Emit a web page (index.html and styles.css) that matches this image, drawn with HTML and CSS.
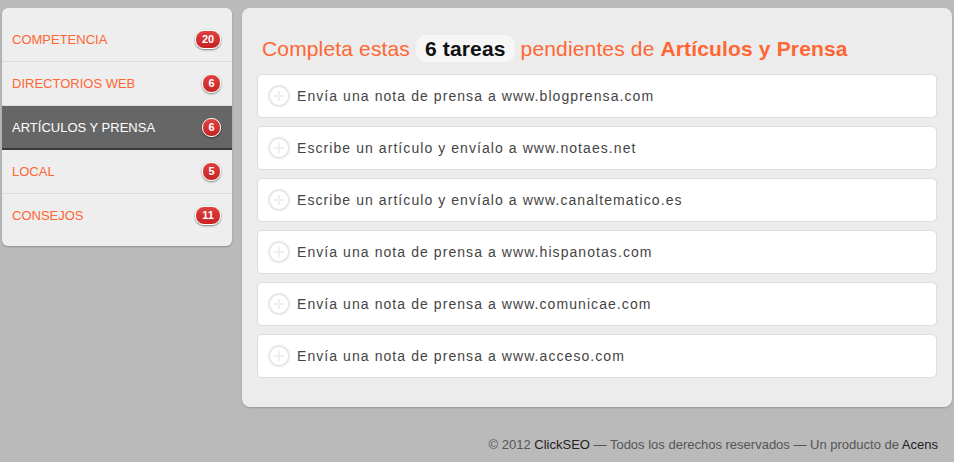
FILE: index.html
```html
<!DOCTYPE html>
<html lang="es">
<head>
    <meta charset="UTF-8">
    <title>ClickSEO - Tareas pendientes</title>
    <link rel="stylesheet" href="styles.css">
</head>
<body>

    <div class="page">
        <ul class="sidebar">
            <li class="cat"><span>COMPETENCIA</span><span class="badge wide">20</span></li>
            <li class="cat"><span>DIRECTORIOS WEB</span><span class="badge">6</span></li>
            <li class="cat active"><span>ARTÍCULOS Y PRENSA</span><span class="badge">6</span></li>
            <li class="cat"><span>LOCAL</span><span class="badge">5</span></li>
            <li class="cat last"><span>CONSEJOS</span><span class="badge wide">11</span></li>
        </ul>

        <div class="main">
            <h1 class="title">Completa estas <span class="count">6 tareas</span> pendientes de <b>Artículos y Prensa</b></h1>

            <div class="task"><span class="check"></span>Envía una nota de prensa a www.blogprensa.com</div>
            <div class="task"><span class="check"></span>Escribe un artículo y envíalo a www.notaes.net</div>
            <div class="task"><span class="check"></span>Escribe un artículo y envíalo a www.canaltematico.es</div>
            <div class="task"><span class="check"></span>Envía una nota de prensa a www.hispanotas.com</div>
            <div class="task"><span class="check"></span>Envía una nota de prensa a www.comunicae.com</div>
            <div class="task"><span class="check"></span>Envía una nota de prensa a www.acceso.com</div>
        </div>
    </div>

    <p class="footer">© 2012 <b>ClickSEO</b> — Todos los derechos reservados — Un producto de <b>Acens</b></p>

</body>
</html>
```

FILE: styles.css
```css
body {
    margin: 0;
    padding: 8px 2px 0 2px;
    background-color: #bababa;
    font-family: "Liberation Sans", Arial, sans-serif;
}

.page {
    display: flex;
    align-items: flex-start;
    gap: 10px;
}

/* menu de categorias */
.sidebar {
    list-style: none;
    margin: 0;
    padding: 10px 0 9px 0;
    width: 230px;
    background-color: #eeeeee;
    border-radius: 6px;
    box-shadow: 0 1px 2px rgba(0, 0, 0, 0.25);
    overflow: hidden;
}

.cat {
    display: flex;
    align-items: center;
    justify-content: space-between;
    height: 43px;
    padding: 0 11px 0 10px;
    border-bottom: 1px solid #dcdcdc;
    color: #ff6633;
    font-size: 13px;
}

.cat.last {
    border-bottom: none;
    height: 43px;
}

.cat.active {
    background-color: #666666;
    color: #ffffff;
    border-bottom: 2px solid #3a3a3a;
    height: 42px;
}

.badge {
    display: inline-block;
    min-width: 17px;
    height: 17px;
    line-height: 17px;
    border-radius: 9px;
    background: linear-gradient(#e0403f, #c42424);
    color: #ffffff;
    font-size: 11px;
    font-weight: bold;
    text-align: center;
    border: 1px solid #ffffff;
    box-shadow: 0 1px 2px rgba(0, 0, 0, 0.5);
}

.badge.wide {
    padding: 0 5px;
    min-width: 14px;
}

/* panel principal */
.main {
    flex: 1;
    background-color: #ececec;
    border-radius: 8px;
    box-shadow: 0 1px 2px rgba(0, 0, 0, 0.2);
    padding: 27px 15px 29px 15px;
}

.title {
    margin: 0 0 12px 5px;
    font-size: 21px;
    letter-spacing: 0.15px;
    font-weight: normal;
    color: #ff6633;
    line-height: 27px;
}

.title b {
    font-weight: bold;
}

.count {
    display: inline-block;
    background-color: #f6f6f6;
    color: #111111;
    font-weight: bold;
    padding: 0 9px;
    border-radius: 10px;
}

.task {
    display: flex;
    align-items: center;
    height: 42px;
    margin-bottom: 8px;
    padding-left: 10px;
    background-color: #ffffff;
    border: 1px solid #dddddd;
    border-radius: 5px;
    color: #444444;
    font-size: 14px;
    letter-spacing: 1.07px;
}

.task:last-child {
    margin-bottom: 0;
}

.check {
    position: relative;
    width: 18px;
    height: 18px;
    margin-right: 7px;
    border: 2px solid #e8e8e8;
    border-radius: 50%;
    flex-shrink: 0;
}

.check::before,
.check::after {
    content: "";
    position: absolute;
    background-color: #eeeeee;
}

.check::before {
    left: 4px;
    top: 8px;
    width: 10px;
    height: 2px;
}

.check::after {
    left: 8px;
    top: 4px;
    width: 2px;
    height: 10px;
}

.footer {
    margin: 30px 14px 0 0;
    text-align: right;
    font-size: 13px;
    color: #555555;
}

.footer b {
    font-weight: normal;
    color: #222222;
}
```
